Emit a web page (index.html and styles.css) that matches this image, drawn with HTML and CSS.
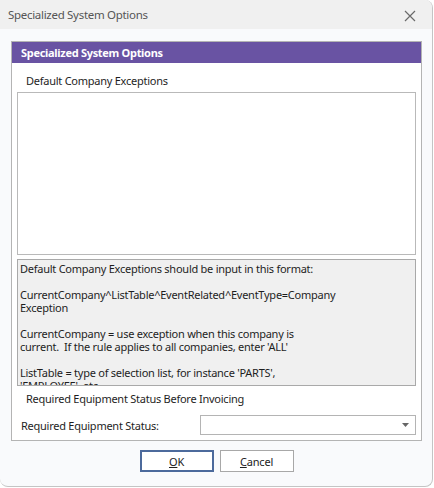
FILE: index.html
```html
<!DOCTYPE html>
<html>
<head>
<meta charset="utf-8">
<link rel="stylesheet" href="styles.css">
</head>
<body>
<div class="window">
  <div class="titlebar">
    <span class="title">Specialized System Options</span>
    <svg class="close" width="12" height="12" viewBox="0 0 12 12"><path d="M1 1L11 11M11 1L1 11" stroke="#6a6a6a" stroke-width="1.2" fill="none"/></svg>
  </div>
  <div class="body">
    <div class="panel">
      <div class="panel-header">Specialized System Options</div>
      <div class="panel-content">
        <div class="label">Default Company Exceptions</div>
        <div class="textarea"></div>
        <div class="info">
          <p>Default Company Exceptions should be input in this format:</p>
          <p>&nbsp;</p>
          <p>CurrentCompany^ListTable^EventRelated^EventType=Company</p>
          <p>Exception</p>
          <p>&nbsp;</p>
          <p>CurrentCompany = use exception when this company is</p>
          <p>current.&nbsp; If the rule applies to all companies, enter 'ALL'</p>
          <p>&nbsp;</p>
          <p>ListTable = type of selection list, for instance 'PARTS',</p>
          <p>'EMPLOYEE', etc.</p>
        </div>
        <div class="label label2">Required Equipment Status Before Invoicing</div>
        <div class="row">
          <span class="row-label">Required Equipment Status:</span>
          <div class="combo">
            <svg class="arrow" width="7" height="4" viewBox="0 0 7 4"><path d="M0 0H7L3.5 4Z" fill="#666"/></svg>
          </div>
        </div>
      </div>
    </div>
    <div class="buttons">
      <button class="btn btn-ok"><u>O</u>K</button>
      <button class="btn"><u>C</u>ancel</button>
    </div>
  </div>
</div>
</body>
</html>
```
FILE: styles.css
```css
html, body {
  margin: 0;
  padding: 0;
  background: #ffffff;
}
body {
  font-family: "Noto Sans", "Open Sans", sans-serif;
  font-size: 11px;
  letter-spacing: -0.25px;
  color: #1e1e1e;
}
.window {
  width: 432px;
  height: 486px;
  border-right: 1px solid #c4c4c4;
  border-bottom: 1px solid #c4c4c4;
  border-radius: 0 8px 8px 8px;
  overflow: hidden;
  background: #f9fafc;
  display: flex;
  flex-direction: column;
}
.titlebar {
  height: 29px;
  background: #f0f0f0;
  display: flex;
  align-items: center;
  justify-content: space-between;
  padding: 0 16px 0 8px;
  flex-shrink: 0;
}
.title {
  font-size: 11.5px;
  letter-spacing: -0.3px;
  color: #555;
}
.close {
  margin-top: 2px;
}
.body {
  padding: 12px 10px 0 11px;
}
.panel {
  border: 1px solid #b4b4b4;
  background: #fff;
  height: 400px;
  box-sizing: border-box;
}
.panel-header {
  background: #6953a3;
  color: #fff;
  font-weight: bold;
  height: 21px;
  line-height: 22px;
  padding-left: 9px;
  font-size: 11px;
  letter-spacing: -0.3px;
}
.panel-content {
  padding: 0 5px;
}
.label {
  padding-left: 9px;
  padding-top: 6px;
  height: 23px;
  line-height: 23px;
}
.textarea {
  height: 163px;
  box-sizing: border-box;
  border: 1px solid #b9b9b9;
  background: #fff;
}
.info {
  margin-top: 4px;
  border: 1px solid #a9a9a9;
  background: #f0f0f0;
  overflow: hidden;
  padding: 2px 2px 0 2px;
  box-sizing: border-box;
  height: 127px;
}
.info p {
  margin: 0;
  height: 13px;
  line-height: 13px;
  white-space: nowrap;
}
.label2 {
  padding-top: 0;
  height: 26px;
  line-height: 26px;
}
.row {
  display: flex;
  align-items: center;
  justify-content: space-between;
  height: 20px;
  margin-top: 3px;
}
.row-label {
  padding-left: 4px;
}
.combo {
  width: 216px;
  height: 20px;
  box-sizing: border-box;
  border: 1px solid #b4b4b4;
  background: #fff;
  display: flex;
  align-items: center;
  justify-content: flex-end;
  padding-right: 6px;
}
.buttons {
  display: flex;
  justify-content: center;
  gap: 6px;
  margin-top: 9px;
}
.btn {
  width: 74px;
  height: 22px;
  box-sizing: border-box;
  border: 1px solid #a8a8a8;
  background: #fff;
  font-family: inherit;
  font-size: 11px;
  letter-spacing: -0.2px;
  color: #222;
  padding: 0;
}
.btn-ok {
  border: 2px solid #4c6a9c;
}
```
